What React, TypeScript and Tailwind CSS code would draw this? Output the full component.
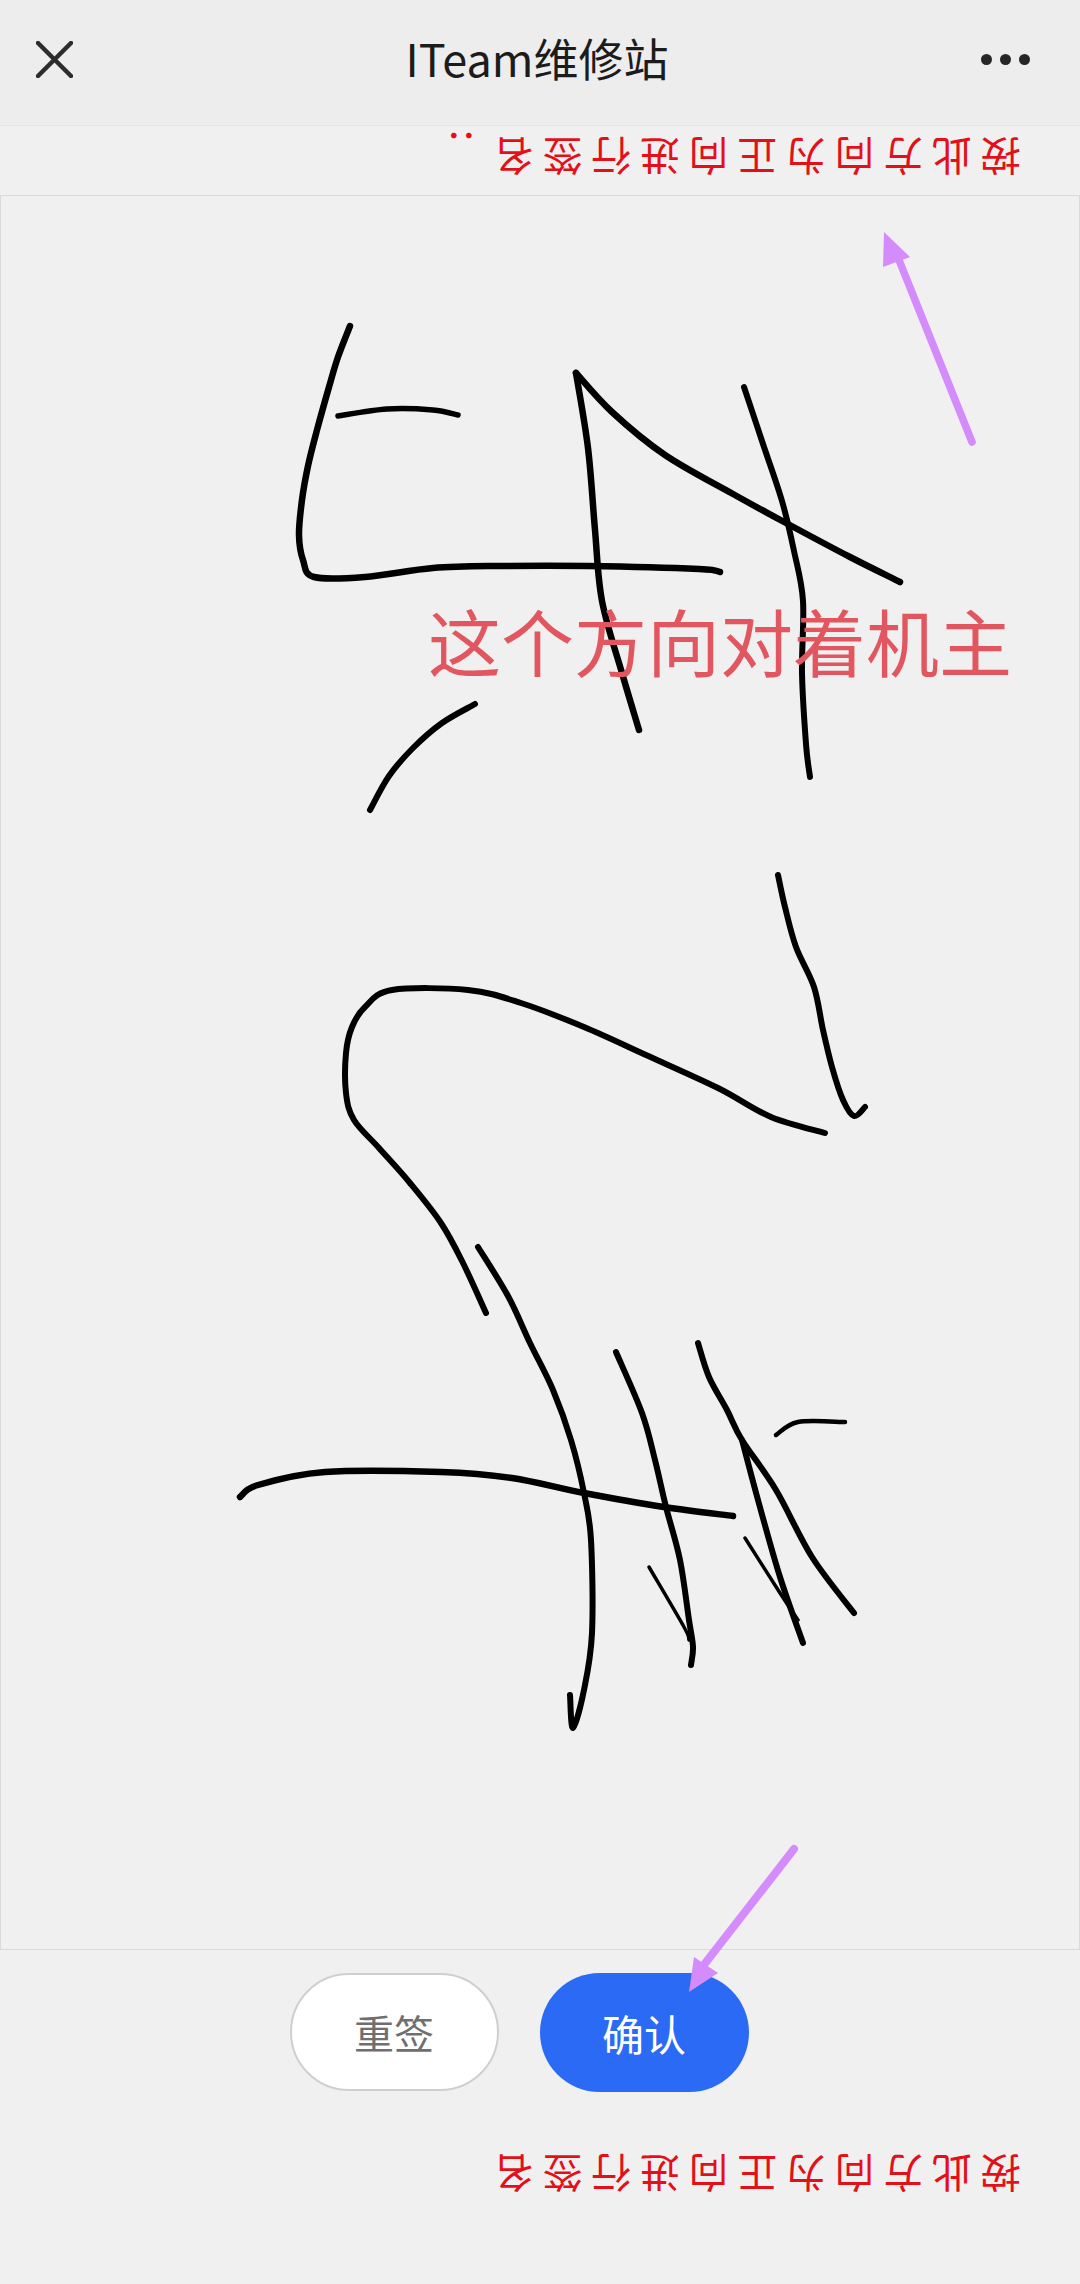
const CJK = "font-['Noto_Sans_CJK_SC','Noto_Sans',sans-serif]";

type P = [number, number];

// Catmull-Rom through the sampled pen points, so strokes stay smooth.
function smooth(pts: P[]): string {
  let d = `M${pts[0][0]} ${pts[0][1]}`;
  for (let i = 0; i < pts.length - 1; i++) {
    const p0 = pts[i - 1] ?? pts[i];
    const p1 = pts[i];
    const p2 = pts[i + 1];
    const p3 = pts[i + 2] ?? p2;
    const c1x = p1[0] + (p2[0] - p0[0]) / 6;
    const c1y = p1[1] + (p2[1] - p0[1]) / 6;
    const c2x = p2[0] - (p3[0] - p1[0]) / 6;
    const c2y = p2[1] - (p3[1] - p1[1]) / 6;
    d += ` C${c1x.toFixed(1)} ${c1y.toFixed(1)} ${c2x.toFixed(1)} ${c2y.toFixed(1)} ${p2[0]} ${p2[1]}`;
  }
  return d;
}

const strokes: { w: number; pts: P[] }[] = [
  { w: 6.5, pts: [[350, 326], [338, 357], [329, 387], [317, 430], [308, 466], [302, 500], [299, 535], [303, 560], [314, 577], [365, 577], [433, 568], [500, 566], [588, 566], [699, 569], [720, 572]] },
  { w: 5.5, pts: [[338, 416], [387, 409], [433, 410], [458, 415]] },
  { w: 6.5, pts: [[576, 373], [588, 448], [595, 530], [602, 601], [622, 673], [639, 730]] },
  { w: 6.5, pts: [[576, 373], [612, 412], [665, 455], [733, 494], [786, 523], [850, 557], [900, 582]] },
  { w: 6, pts: [[744, 387], [762, 441], [782, 501], [794, 551], [803, 601], [802, 673], [806, 744], [810, 777]] },
  { w: 6, pts: [[475, 704], [442, 723], [413, 748], [389, 776], [370, 810]] },
  { w: 6, pts: [[778, 875], [785, 907], [796, 947], [814, 987], [823, 1030], [832, 1067], [843, 1100], [854, 1116], [865, 1107]] },
  { w: 6, pts: [[825, 1133], [771, 1117], [718, 1088], [646, 1055], [584, 1027], [521, 1003], [468, 990], [392, 990], [365, 1007], [352, 1027], [346, 1053], [346, 1093], [354, 1120], [379, 1148], [410, 1183], [441, 1223], [463, 1263], [486, 1313]] },
  { w: 6, pts: [[478, 1247], [508, 1296], [530, 1343], [553, 1390], [571, 1440], [584, 1493], [591, 1540], [592, 1633], [584, 1690], [573, 1728], [570, 1695]] },
  { w: 6.5, pts: [[240, 1497], [258, 1485], [325, 1472], [441, 1472], [512, 1478], [584, 1493], [664, 1507], [733, 1516]] },
  { w: 6, pts: [[616, 1352], [642, 1413], [655, 1460], [666, 1507], [680, 1560], [689, 1620], [693, 1647], [691, 1665]] },
  { w: 3.5, pts: [[649, 1567], [684, 1627], [689, 1640]] },
  { w: 6, pts: [[698, 1343], [709, 1377], [727, 1410], [742, 1440], [776, 1490], [812, 1557], [854, 1613]] },
  { w: 6, pts: [[742, 1440], [758, 1500], [780, 1577], [803, 1643]] },
  { w: 3.5, pts: [[745, 1538], [780, 1593], [798, 1620]] },
  { w: 4.5, pts: [[776, 1435], [798, 1422], [845, 1422]] },
];

function RedNote({ text }: { text: string }) {
  return (
    <p className={`${CJK} rotate-180 whitespace-nowrap text-[40px] leading-[48px] tracking-[8.7px] text-[#e3101a]`}>
      {text}
    </p>
  );
}

export default function App() {
  return (
    <div className="relative flex h-[2284px] w-[1080px] flex-col overflow-hidden bg-[#f0f0f0]">
      <header className="flex h-[126px] shrink-0 items-start justify-between border-b border-[#e6e6e6] bg-[#ededed] pl-[36px] pr-[50px] pt-[41px]">
        <svg width="37" height="37" viewBox="0 0 37 37" fill="none" stroke="#2c2c2c" strokeWidth="4.5" strokeLinecap="round">
          <path d="M2 2 L35 35 M35 2 L2 35" />
        </svg>
        <h1 className={`${CJK} -mt-[11px] ml-[20px] text-[45px] leading-[56px] text-[#1c1c1c]`}>ITeam维修站</h1>
        <div className="flex gap-[8px] pt-[13px]">
          <span className="h-[11px] w-[11px] rounded-full bg-[#262626]" />
          <span className="h-[11px] w-[11px] rounded-full bg-[#262626]" />
          <span className="h-[11px] w-[11px] rounded-full bg-[#262626]" />
        </div>
      </header>

      <div className="flex h-[69px] shrink-0 items-center justify-end pb-[6px] pr-[59px]">
        <span className={`${CJK} mr-[5px] mt-[2px] h-[30px] w-[30px] rotate-90 self-start text-center text-[30px] font-bold leading-[30px] text-[#e3101a]`}>：</span>
        <RedNote text="按此方向为正向进行签名" />
      </div>

      <main className="h-[1755px] shrink-0 border border-[#dadada]">
        <svg className="block h-full w-full" viewBox="1 196 1078 1753" fill="none" stroke="#000" strokeLinecap="round" strokeLinejoin="round">
          {strokes.map((s, i) => (
            <path key={i} d={smooth(s.pts)} strokeWidth={s.w} />
          ))}
        </svg>
      </main>

      <div className="mt-[23px] flex shrink-0 justify-center gap-[41px] pr-[42px]">
        <button className={`${CJK} h-[118px] w-[209px] rounded-[59px] border-2 border-[#cfcfcf] bg-white text-[40px] text-[#6f6f6f]`}>
          重签
        </button>
        <button className={`${CJK} h-[119px] w-[209px] rounded-[60px] bg-[#2b6af5] text-[42px] text-white`}>
          确认
        </button>
      </div>

      <div className="mt-[59px] flex justify-end pr-[59px]">
        <RedNote text="按此方向为正向进行签名" />
      </div>

      <p className={`${CJK} absolute left-[428px] top-[594px] whitespace-nowrap text-[73px] leading-[90px] text-[#e2575f]`}>
        这个方向对着机主
      </p>

      <svg className="pointer-events-none absolute inset-0" width="1080" height="2284" viewBox="0 0 1080 2284" fill="none">
        <path d="M972 442 L897 255" stroke="#d48bfb" strokeWidth="7.5" strokeLinecap="round" />
        <path d="M884 232 L910 257 L883 267 Z" fill="#d48bfb" />
        <path d="M794 1849 L703 1966" stroke="#d48bfb" strokeWidth="8" strokeLinecap="round" />
        <path d="M689 1992 L694 1957 L718 1973 Z" fill="#d48bfb" />
      </svg>
    </div>
  );
}
